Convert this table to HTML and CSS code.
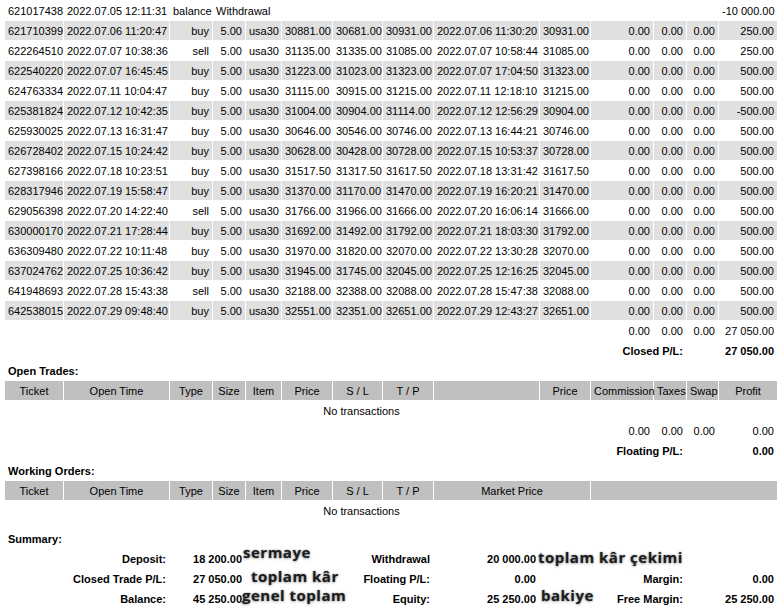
FILE: index.html
```html
<!DOCTYPE html>
<html>
<head>
<meta charset="utf-8">
<title>Statement</title>
<link rel="stylesheet" href="styles.css">
</head>
<body>
<table class="report">
<colgroup>
<col class="w58"><col class="w105"><col class="w42"><col class="w32"><col class="w35"><col class="w50"><col class="w49"><col class="w50"><col class="w105"><col class="w50"><col class="w62"><col class="w32"><col class="w31"><col class="w58">
</colgroup>
<tbody>
<tr><td>621017438</td><td>2022.07.05 12:11:31</td><td>balance</td><td colspan="10">Withdrawal</td><td class="r">-10 000.00</td></tr>
<tr class="g"><td>621710399</td><td>2022.07.06 11:20:47</td><td class="r">buy</td><td class="r">5.00</td><td>usa30</td><td>30881.00</td><td>30681.00</td><td>30931.00</td><td>2022.07.06 11:30:20</td><td>30931.00</td><td class="r">0.00</td><td class="r">0.00</td><td class="r">0.00</td><td class="r">250.00</td></tr>
<tr><td>622264510</td><td>2022.07.07 10:38:36</td><td class="r">sell</td><td class="r">5.00</td><td>usa30</td><td>31135.00</td><td>31335.00</td><td>31085.00</td><td>2022.07.07 10:58:44</td><td>31085.00</td><td class="r">0.00</td><td class="r">0.00</td><td class="r">0.00</td><td class="r">250.00</td></tr>
<tr class="g"><td>622540220</td><td>2022.07.07 16:45:45</td><td class="r">buy</td><td class="r">5.00</td><td>usa30</td><td>31223.00</td><td>31023.00</td><td>31323.00</td><td>2022.07.07 17:04:50</td><td>31323.00</td><td class="r">0.00</td><td class="r">0.00</td><td class="r">0.00</td><td class="r">500.00</td></tr>
<tr><td>624763334</td><td>2022.07.11 10:04:47</td><td class="r">buy</td><td class="r">5.00</td><td>usa30</td><td>31115.00</td><td>30915.00</td><td>31215.00</td><td>2022.07.11 12:18:10</td><td>31215.00</td><td class="r">0.00</td><td class="r">0.00</td><td class="r">0.00</td><td class="r">500.00</td></tr>
<tr class="g"><td>625381824</td><td>2022.07.12 10:42:35</td><td class="r">buy</td><td class="r">5.00</td><td>usa30</td><td>31004.00</td><td>30904.00</td><td>31114.00</td><td>2022.07.12 12:56:29</td><td>30904.00</td><td class="r">0.00</td><td class="r">0.00</td><td class="r">0.00</td><td class="r">-500.00</td></tr>
<tr><td>625930025</td><td>2022.07.13 16:31:47</td><td class="r">buy</td><td class="r">5.00</td><td>usa30</td><td>30646.00</td><td>30546.00</td><td>30746.00</td><td>2022.07.13 16:44:21</td><td>30746.00</td><td class="r">0.00</td><td class="r">0.00</td><td class="r">0.00</td><td class="r">500.00</td></tr>
<tr class="g"><td>626728402</td><td>2022.07.15 10:24:42</td><td class="r">buy</td><td class="r">5.00</td><td>usa30</td><td>30628.00</td><td>30428.00</td><td>30728.00</td><td>2022.07.15 10:53:37</td><td>30728.00</td><td class="r">0.00</td><td class="r">0.00</td><td class="r">0.00</td><td class="r">500.00</td></tr>
<tr><td>627398166</td><td>2022.07.18 10:23:51</td><td class="r">buy</td><td class="r">5.00</td><td>usa30</td><td>31517.50</td><td>31317.50</td><td>31617.50</td><td>2022.07.18 13:31:42</td><td>31617.50</td><td class="r">0.00</td><td class="r">0.00</td><td class="r">0.00</td><td class="r">500.00</td></tr>
<tr class="g"><td>628317946</td><td>2022.07.19 15:58:47</td><td class="r">buy</td><td class="r">5.00</td><td>usa30</td><td>31370.00</td><td>31170.00</td><td>31470.00</td><td>2022.07.19 16:20:21</td><td>31470.00</td><td class="r">0.00</td><td class="r">0.00</td><td class="r">0.00</td><td class="r">500.00</td></tr>
<tr><td>629056398</td><td>2022.07.20 14:22:40</td><td class="r">sell</td><td class="r">5.00</td><td>usa30</td><td>31766.00</td><td>31966.00</td><td>31666.00</td><td>2022.07.20 16:06:14</td><td>31666.00</td><td class="r">0.00</td><td class="r">0.00</td><td class="r">0.00</td><td class="r">500.00</td></tr>
<tr class="g"><td>630000170</td><td>2022.07.21 17:28:44</td><td class="r">buy</td><td class="r">5.00</td><td>usa30</td><td>31692.00</td><td>31492.00</td><td>31792.00</td><td>2022.07.21 18:03:30</td><td>31792.00</td><td class="r">0.00</td><td class="r">0.00</td><td class="r">0.00</td><td class="r">500.00</td></tr>
<tr><td>636309480</td><td>2022.07.22 10:11:48</td><td class="r">buy</td><td class="r">5.00</td><td>usa30</td><td>31970.00</td><td>31820.00</td><td>32070.00</td><td>2022.07.22 13:30:28</td><td>32070.00</td><td class="r">0.00</td><td class="r">0.00</td><td class="r">0.00</td><td class="r">500.00</td></tr>
<tr class="g"><td>637024762</td><td>2022.07.25 10:36:42</td><td class="r">buy</td><td class="r">5.00</td><td>usa30</td><td>31945.00</td><td>31745.00</td><td>32045.00</td><td>2022.07.25 12:16:25</td><td>32045.00</td><td class="r">0.00</td><td class="r">0.00</td><td class="r">0.00</td><td class="r">500.00</td></tr>
<tr><td>641948693</td><td>2022.07.28 15:43:38</td><td class="r">sell</td><td class="r">5.00</td><td>usa30</td><td>32188.00</td><td>32388.00</td><td>32088.00</td><td>2022.07.28 15:47:38</td><td>32088.00</td><td class="r">0.00</td><td class="r">0.00</td><td class="r">0.00</td><td class="r">500.00</td></tr>
<tr class="g"><td>642538015</td><td>2022.07.29 09:48:40</td><td class="r">buy</td><td class="r">5.00</td><td>usa30</td><td>32551.00</td><td>32351.00</td><td>32651.00</td><td>2022.07.29 12:43:27</td><td>32651.00</td><td class="r">0.00</td><td class="r">0.00</td><td class="r">0.00</td><td class="r">500.00</td></tr>
<tr><td colspan="10"></td><td class="r">0.00</td><td class="r">0.00</td><td class="r">0.00</td><td class="r">27 050.00</td></tr>
<tr class="b"><td colspan="10"></td><td colspan="2" class="r">Closed P/L:</td><td colspan="2" class="r">27 050.00</td></tr>

<tr class="b"><td colspan="14">Open Trades:</td></tr>
<tr class="h"><td>Ticket</td><td>Open Time</td><td>Type</td><td>Size</td><td>Item</td><td>Price</td><td>S / L</td><td>T / P</td><td></td><td>Price</td><td>Commission</td><td>Taxes</td><td>Swap</td><td>Profit</td></tr>
<tr><td colspan="13" class="c">No transactions</td><td></td></tr>
<tr><td colspan="10"></td><td class="r">0.00</td><td class="r">0.00</td><td class="r">0.00</td><td class="r">0.00</td></tr>
<tr class="b"><td colspan="10"></td><td colspan="2" class="r">Floating P/L:</td><td colspan="2" class="r">0.00</td></tr>

<tr class="b"><td colspan="14">Working Orders:</td></tr>
<tr class="h"><td>Ticket</td><td>Open Time</td><td>Type</td><td>Size</td><td>Item</td><td>Price</td><td>S / L</td><td>T / P</td><td colspan="2">Market Price</td><td colspan="4"></td></tr>
<tr><td colspan="13" class="c">No transactions</td><td></td></tr>
<tr class="sp"><td colspan="14"></td></tr>

<tr class="b"><td colspan="14">Summary:</td></tr>
<tr class="b"><td colspan="2" class="r">Deposit:</td><td colspan="2" class="r">18 200.00</td><td colspan="4" class="r">Withdrawal</td><td class="r">20 000.00</td><td colspan="5"></td></tr>
<tr class="b"><td colspan="2" class="r">Closed Trade P/L:</td><td colspan="2" class="r">27 050.00</td><td colspan="4" class="r">Floating P/L:</td><td class="r">0.00</td><td colspan="3" class="r">Margin:</td><td colspan="2" class="r">0.00</td></tr>
<tr class="b"><td colspan="2" class="r">Balance:</td><td colspan="2" class="r">45 250.00</td><td colspan="4" class="r">Equity:</td><td class="r">25 250.00</td><td colspan="3" class="r">Free Margin:</td><td colspan="2" class="r">25 250.00</td></tr>
</tbody>
</table>

<div class="note n1">sermaye</div>
<div class="note n2">toplam kâr</div>
<div class="note n3">genel toplam</div>
<div class="note n4">toplam kâr çekimi</div>
<div class="note n5">bakiye</div>
</body>
</html>
```
FILE: styles.css
```css
html, body {
  margin: 0;
  padding: 0;
  background: #ffffff;
}
body {
  position: relative;
  padding-left: 4px;
  font-family: "Liberation Sans", Arial, sans-serif;
  font-size: 11px;
  color: #000000;
}
.report {
  border-collapse: separate;
  border-spacing: 1px;
  table-layout: fixed;
  width: 774px;
}
.report td {
  height: 18px;
  padding: 1px 3px 0 3px;
  white-space: nowrap;
  overflow: visible;
  text-align: left;
  vertical-align: middle;
  line-height: 13px;
}
.w58 { width: 58px; }
.w105 { width: 105px; }
.w42 { width: 42px; }
.w32 { width: 32px; }
.w35 { width: 35px; }
.w50 { width: 50px; }
.w49 { width: 49px; }
.w62 { width: 62px; }
.w31 { width: 31px; }

.report td.r { text-align: right; }
.report td.c { text-align: center; }
.g td { background: #e0e0e0; }
.h td { background: #c0c0c0; text-align: center; }
.b td { font-weight: bold; }
.report .sp td { height: 7px; padding: 0; }

.note {
  position: absolute;
  font-family: "Open Sans", "DejaVu Sans", sans-serif;
  font-weight: 700;
  font-size: 15px;
  letter-spacing: 0.5px;
  line-height: 12px;
  color: #1c1c1c;
  white-space: nowrap;
  text-shadow: 0 0 2px rgba(0,0,0,0.4), 0 1px 3px rgba(0,0,0,0.25);
}
.n1 { left: 243px; top: 546px; }
.n2 { left: 251px; top: 570px; }
.n3 { left: 242px; top: 589px; }
.n4 { left: 538px; top: 551px; }
.n5 { left: 541px; top: 589px; }
```
